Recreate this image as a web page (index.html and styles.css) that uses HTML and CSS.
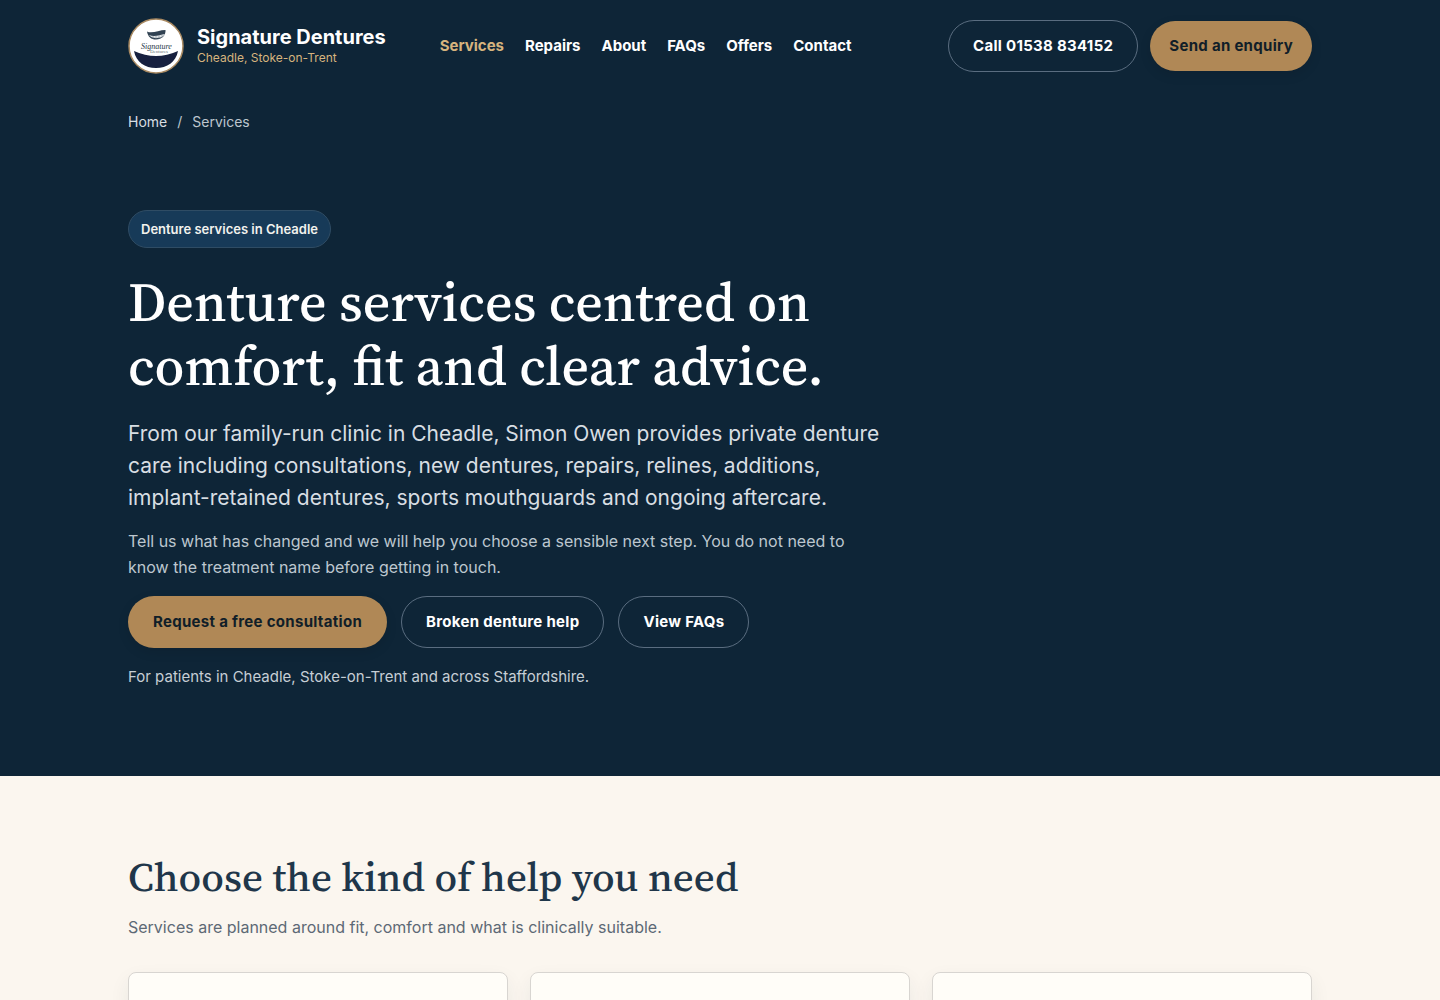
FILE: index.html
```html
<!DOCTYPE html>
<html lang="en-GB">

<head>
	<meta charset="utf-8">
	<meta name="viewport" content="width=device-width, initial-scale=1">
	<title>Services | Signature Dentures</title>
	<link rel="stylesheet" href="styles.css">
</head>

<body>
	<header class="site-header">
		<div class="container header-inner">
			<a class="brand" href="#">
				<svg class="brand-logo" viewBox="0 0 56 56" aria-hidden="true">
					<circle cx="28" cy="28" r="27" fill="#fff" stroke="#a98a62" stroke-width="1.500"/>
					<path d="M6 33Q28 43 50 33C48 44 39 50 28 50S8 44 6 33Z" fill="#17203f"/>
					<path d="M19 13.500C24 16 31 12 37.500 12C38 17 34 21.500 28 21.500C23 21.500 20 19 19 13.500Z" fill="#314252"/>
					<path d="M21 17C26 19.500 32 17 37 16C35 19 32 20 28 20C25 20 22.500 19 21 17Z" fill="#e4e8eb"/>
					<path d="M25 18V20.500M28 18V21M31 17.500V20.500M34 17V19.500" stroke="#7d8991" stroke-width=".6"/>
					<text class="logo-script" x="13" y="31">Signature</text>
					<text class="logo-small" x="22" y="35">Dentures</text>
				</svg>
				<span class="brand-text">
					<strong>Signature Dentures</strong>
					<small>Cheadle, Stoke-on-Trent</small>
				</span>
			</a>
			<nav class="main-nav" aria-label="Main">
				<a class="active" href="#">Services</a>
				<a href="#">Repairs</a>
				<a href="#">About</a>
				<a href="#">FAQs</a>
				<a href="#">Offers</a>
				<a href="#">Contact</a>
			</nav>
			<div class="header-actions">
				<a class="btn btn-outline" href="tel:01538834152">Call 01538 834152</a>
				<a class="btn btn-gold btn-compact" href="#">Send an enquiry</a>
			</div>
		</div>
	</header>

	<main>
		<section class="hero">
			<div class="container">
				<nav class="breadcrumbs" aria-label="Breadcrumb">
					<a href="#">Home</a>
					<span>/</span>
					<span>Services</span>
				</nav>
				<div class="hero-content">
					<span class="eyebrow">Denture services in Cheadle</span>
					<h1>Denture services centred on comfort, fit and clear advice.</h1>
					<p class="lead">From our family-run clinic in Cheadle, Simon Owen provides private denture care including consultations, new dentures, repairs, relines, additions, implant-retained dentures, sports mouthguards and ongoing aftercare.</p>
					<p class="hero-note">Tell us what has changed and we will help you choose a sensible next step. You do not need to know the treatment name before getting in touch.</p>
					<div class="hero-actions">
						<a class="btn btn-gold" href="#">Request a free consultation</a>
						<a class="btn btn-outline" href="#">Broken denture help</a>
						<a class="btn btn-outline" href="#">View FAQs</a>
					</div>
					<p class="hero-area">For patients in Cheadle, Stoke-on-Trent and across Staffordshire.</p>
				</div>
			</div>
		</section>

		<section class="services">
			<div class="container">
				<h2>Choose the kind of help you need</h2>
				<p class="section-intro">Services are planned around fit, comfort and what is clinically suitable.</p>
				<div class="card-grid">
					<article class="card"></article>
					<article class="card"></article>
					<article class="card"></article>
				</div>
			</div>
		</section>
	</main>
</body>

</html>
```
FILE: styles.css
```css
:root {
	--navy: #0e2537;
	--gold: #b08856;
	--cream: #fbf6ef;
	--serif: "Source Serif 4", "Source Serif Pro", "Liberation Serif", serif;
}

* { box-sizing: border-box; }
body { margin: 0; background: var(--cream); color: #1f364a; font-family: Inter, "Liberation Sans", sans-serif; font-size: 16px; line-height: 26px; }
h1, h2, p { margin: 0; }
a { color: inherit; text-decoration: none; }
.container { width: 100%; max-width: 1232px; margin: 0 auto; padding: 0 24px; }

/* header */
.site-header { background: var(--navy); color: #fff; }
.header-inner { display: flex; align-items: center; min-height: 92px; }
.brand { display: flex; align-items: center; gap: 13px; }
.brand-logo { width: 56px; height: 56px; flex: none; }
.logo-script { font: italic 8px "Liberation Serif", serif; fill: #263646; }
.logo-small { font: 5px "Liberation Serif", serif; fill: #66717b; }
.brand-text { display: flex; flex-direction: column; white-space: nowrap; }
.brand-text strong { font-size: 20px; line-height: 24px; }
.brand-text small { color: #d6b47e; font-size: 12px; line-height: 18px; }
.main-nav { display: flex; gap: 21px; margin-left: 54px; font-size: 15px; font-weight: 700; }
.main-nav .active { color: #d6b47e; }
.header-actions { display: flex; align-items: center; gap: 12px; margin-left: auto; }

.btn { display: inline-flex; align-items: center; justify-content: center; min-height: 52px; padding: 0 24px; border: 1px solid transparent; border-radius: 26px; font-size: 15px; font-weight: 700; letter-spacing: .02em; white-space: nowrap; }
.btn-outline { border-color: #5a6d80; color: #fff; }
.btn-gold { background: var(--gold); color: #111e28; box-shadow: 0 4px 12px rgba(0, 0, 0, .1); }
.btn-compact { min-height: 50px; padding: 0 18px; }

/* hero */
.hero { background: var(--navy); color: #fff; padding: 17px 0 86px; }
.breadcrumbs { display: flex; gap: 10px; color: #bdc6ce; font-size: 14px; }
.breadcrumbs a { color: #d8dee2; }
.hero-content { max-width: 760px; padding-top: 75px; }
.eyebrow { display: inline-flex; align-items: center; min-height: 38px; padding: 0 12px; border: 1px solid #2f4c64; border-radius: 19px; background: #173a58; color: #f2f2ee; font-size: 13px; font-weight: 600; }
h1 { margin-top: 22px; font-family: var(--serif); font-size: 54px; font-weight: 500; line-height: 64px; }
.lead { margin-top: 20px; color: #d8dee3; font-size: 21px; line-height: 32px; }
.hero-note { margin-top: 14px; color: #bdc7cf; }
.hero-actions { display: flex; flex-wrap: wrap; gap: 14px; margin-top: 16px; }
.hero-area { margin-top: 16px; color: #c6ced5; font-size: 15px; }

/* services */
.services { padding: 76px 0; }
h2 { font-family: var(--serif); font-size: 41px; font-weight: 500; line-height: 50px; }
.section-intro { margin-top: 12px; color: #5d6975; }
.card-grid { display: grid; grid-template-columns: repeat(3, 1fr); gap: 22px; margin-top: 32px; }
.card { min-height: 240px; border: 1px solid #d8d5d1; border-radius: 8px; background: #fffdf8; box-shadow: 0 8px 20px rgba(31, 54, 74, .07); }

@media (max-width: 1100px) {
	.header-inner { flex-wrap: wrap; gap: 16px; padding-top: 16px; padding-bottom: 16px; }
	.main-nav { flex-wrap: wrap; margin-left: 0; }
}

@media (max-width: 720px) {
	.header-actions { flex-wrap: wrap; margin-left: 0; }
	h1 { font-size: 40px; line-height: 44px; }
	h2 { font-size: 34px; line-height: 40px; }
	.card-grid { grid-template-columns: 1fr; }
}
```
